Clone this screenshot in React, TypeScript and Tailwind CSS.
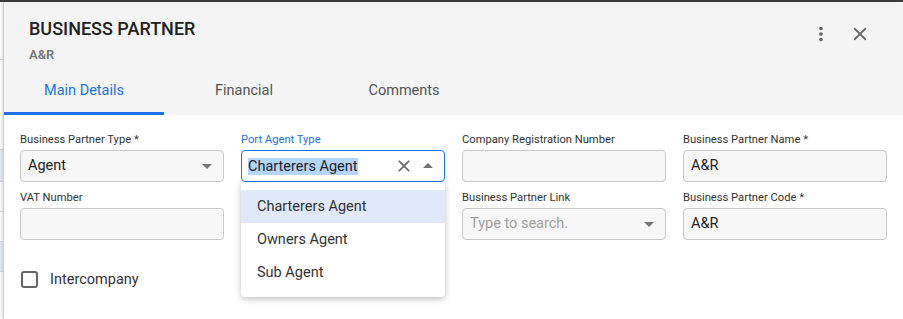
import React from "react";

const font = { fontFamily: "Roboto, 'Liberation Sans', sans-serif" };

function ArrowDown({ up = false }: { up?: boolean }) {
    return (
        <svg width="24" height="24" viewBox="0 0 24 24" className="shrink-0">
            <path d={up ? "M7 14l5-5 5 5z" : "M7 10l5 5 5-5z"} fill="#757575" />
        </svg>
    );
}

function CloseIcon({ size = 22, color = "#666" }: { size?: number; color?: string }) {
    return (
        <svg width={size} height={size} viewBox="0 0 24 24" className="shrink-0">
            <path
                d="M19 6.41 17.59 5 12 10.59 6.41 5 5 6.41 10.59 12 5 17.59 6.41 19 12 13.41 17.59 19 19 17.59 13.41 12z"
                fill={color}
            />
        </svg>
    );
}

function Field({ label, value, placeholder, select }: { label: string; value?: string; placeholder?: string; select?: boolean }) {
    return (
        <div className="flex flex-col">
            <label className="text-[11.2px] leading-4 text-[#333] mb-[2px] whitespace-nowrap h-4">{label}</label>
            <div className="h-8 rounded-[4px] border border-[#c8c8c8] bg-[#f7f7f7] flex items-center pl-[7px] pr-1">
                <span className={"flex-1 text-[14.5px] " + (value ? "text-[#222]" : "text-[#a0a0a0]")}>
                    {value || placeholder || ""}
                </span>
                {select && <ArrowDown />}
            </div>
        </div>
    );
}

export default function App() {
    return (
        <div className="w-[903px] h-[319px] overflow-hidden flex flex-col bg-white" style={font}>
            <div className="h-[2px] bg-[#3c3c3c] shrink-0" />
            <div className="flex flex-1">
                {/* page behind the dialog */}
                <div className="w-[3px] shrink-0 flex flex-col bg-white">
                    <div className="h-[58px] border-b border-[#d8d8d8]" />
                    <div className="h-[90px] border-b border-[#d8d8d8]" />
                    <div className="h-[32px] bg-[#e6ecf5] border-b border-[#d8d8d8]" />
                    <div className="h-[30px] border-b border-[#d8d8d8]" />
                    <div className="h-[30px] border-b border-[#d8d8d8]" />
                    <div className="h-[30px] bg-[#e6ecf5] border-b border-[#d8d8d8]" />
                </div>

                <div className="flex-1 flex flex-col border-l border-[#cfcfcf] shadow-[-1px_0_3px_rgba(0,0,0,0.15)]">
                    {/* header */}
                    <div className="bg-[#f4f4f4] h-[113px] flex flex-col shrink-0">
                        <div className="flex items-start pl-[25px] pr-[32px] pt-[15px]">
                            <div className="flex-1">
                                <h1 className="text-[18px] leading-6 font-medium text-[#222]">BUSINESS PARTNER</h1>
                                <div className="text-[13px] font-semibold text-[#777] mt-[6px] leading-4">A&amp;R</div>
                            </div>
                            <div className="flex items-center gap-[17px] mt-[6px]">
                                <svg width="22" height="22" viewBox="0 0 24 24">
                                    <path
                                        d="M12 8c1.1 0 2-.9 2-2s-.9-2-2-2-2 .9-2 2 .9 2 2 2zm0 2c-1.1 0-2 .9-2 2s.9 2 2 2 2-.9 2-2-.9-2-2-2zm0 6c-1.1 0-2 .9-2 2s.9 2 2 2 2-.9 2-2-.9-2-2-2z"
                                        fill="#666"
                                    />
                                </svg>
                                <CloseIcon size={22} />
                            </div>
                        </div>
                        <div className="flex mt-auto h-[48px]">
                            <div className="w-[160px] flex items-center justify-center text-[14.5px] text-[#1a73e8] border-b-[3px] border-[#1a73e8] pt-[3px]">
                                Main Details
                            </div>
                            <div className="w-[160px] flex items-center justify-center text-[14.5px] text-[#555]">Financial</div>
                            <div className="w-[160px] flex items-center justify-center text-[14.5px] text-[#555]">Comments</div>
                        </div>
                    </div>

                    {/* form */}
                    <div className="px-4 pt-[17px]">
                        <div className="grid grid-cols-4 gap-x-[17px] gap-y-2 w-[867px]">
                            <Field label="Business Partner Type *" value="Agent" select />
                            <div className="flex flex-col relative">
                                <label className="text-[11.2px] leading-4 text-[#1a73e8] mb-[2px]">Port Agent Type</label>
                                <div className="h-8 rounded-[4px] border border-[#1a73e8] bg-white flex items-center pl-[6px] pr-1">
                                    <span className="flex-1">
                                        <span className="text-[14.5px] text-[#222] bg-[#b4d5fe]">Charterers Agent</span>
                                    </span>
                                    <span className="mr-[2px]"><CloseIcon size={20} color="#666" /></span>
                                    <ArrowDown up />
                                </div>
                                <div className="absolute left-0 right-0 top-[50px] z-10 bg-white rounded-b-[4px] shadow-[0_2px_6px_rgba(0,0,0,0.25)] py-2">
                                    <div className="h-[33px] flex items-center px-4 text-[14.5px] text-[#333] bg-[#dfe9f8]">Charterers Agent</div>
                                    <div className="h-[33px] flex items-center px-4 text-[14.5px] text-[#333]">Owners Agent</div>
                                    <div className="h-[33px] flex items-center px-4 text-[14.5px] text-[#333]">Sub Agent</div>
                                </div>
                            </div>
                            <Field label="Company Registration Number" />
                            <Field label="Business Partner Name *" value="A&R" />
                            <Field label="VAT Number" />
                            <Field label="" />
                            <Field label="Business Partner Link" placeholder="Type to search." select />
                            <Field label="Business Partner Code *" value="A&R" />
                        </div>

                        <div className="flex items-center mt-[29px] pl-[1px]">
                            <div className="w-[17px] h-[17px] border-2 border-[#666] rounded-[3px]" />
                            <span className="ml-[12px] text-[14.5px] text-[#333]">Intercompany</span>
                        </div>
                    </div>
                </div>
            </div>
        </div>
    );
}
